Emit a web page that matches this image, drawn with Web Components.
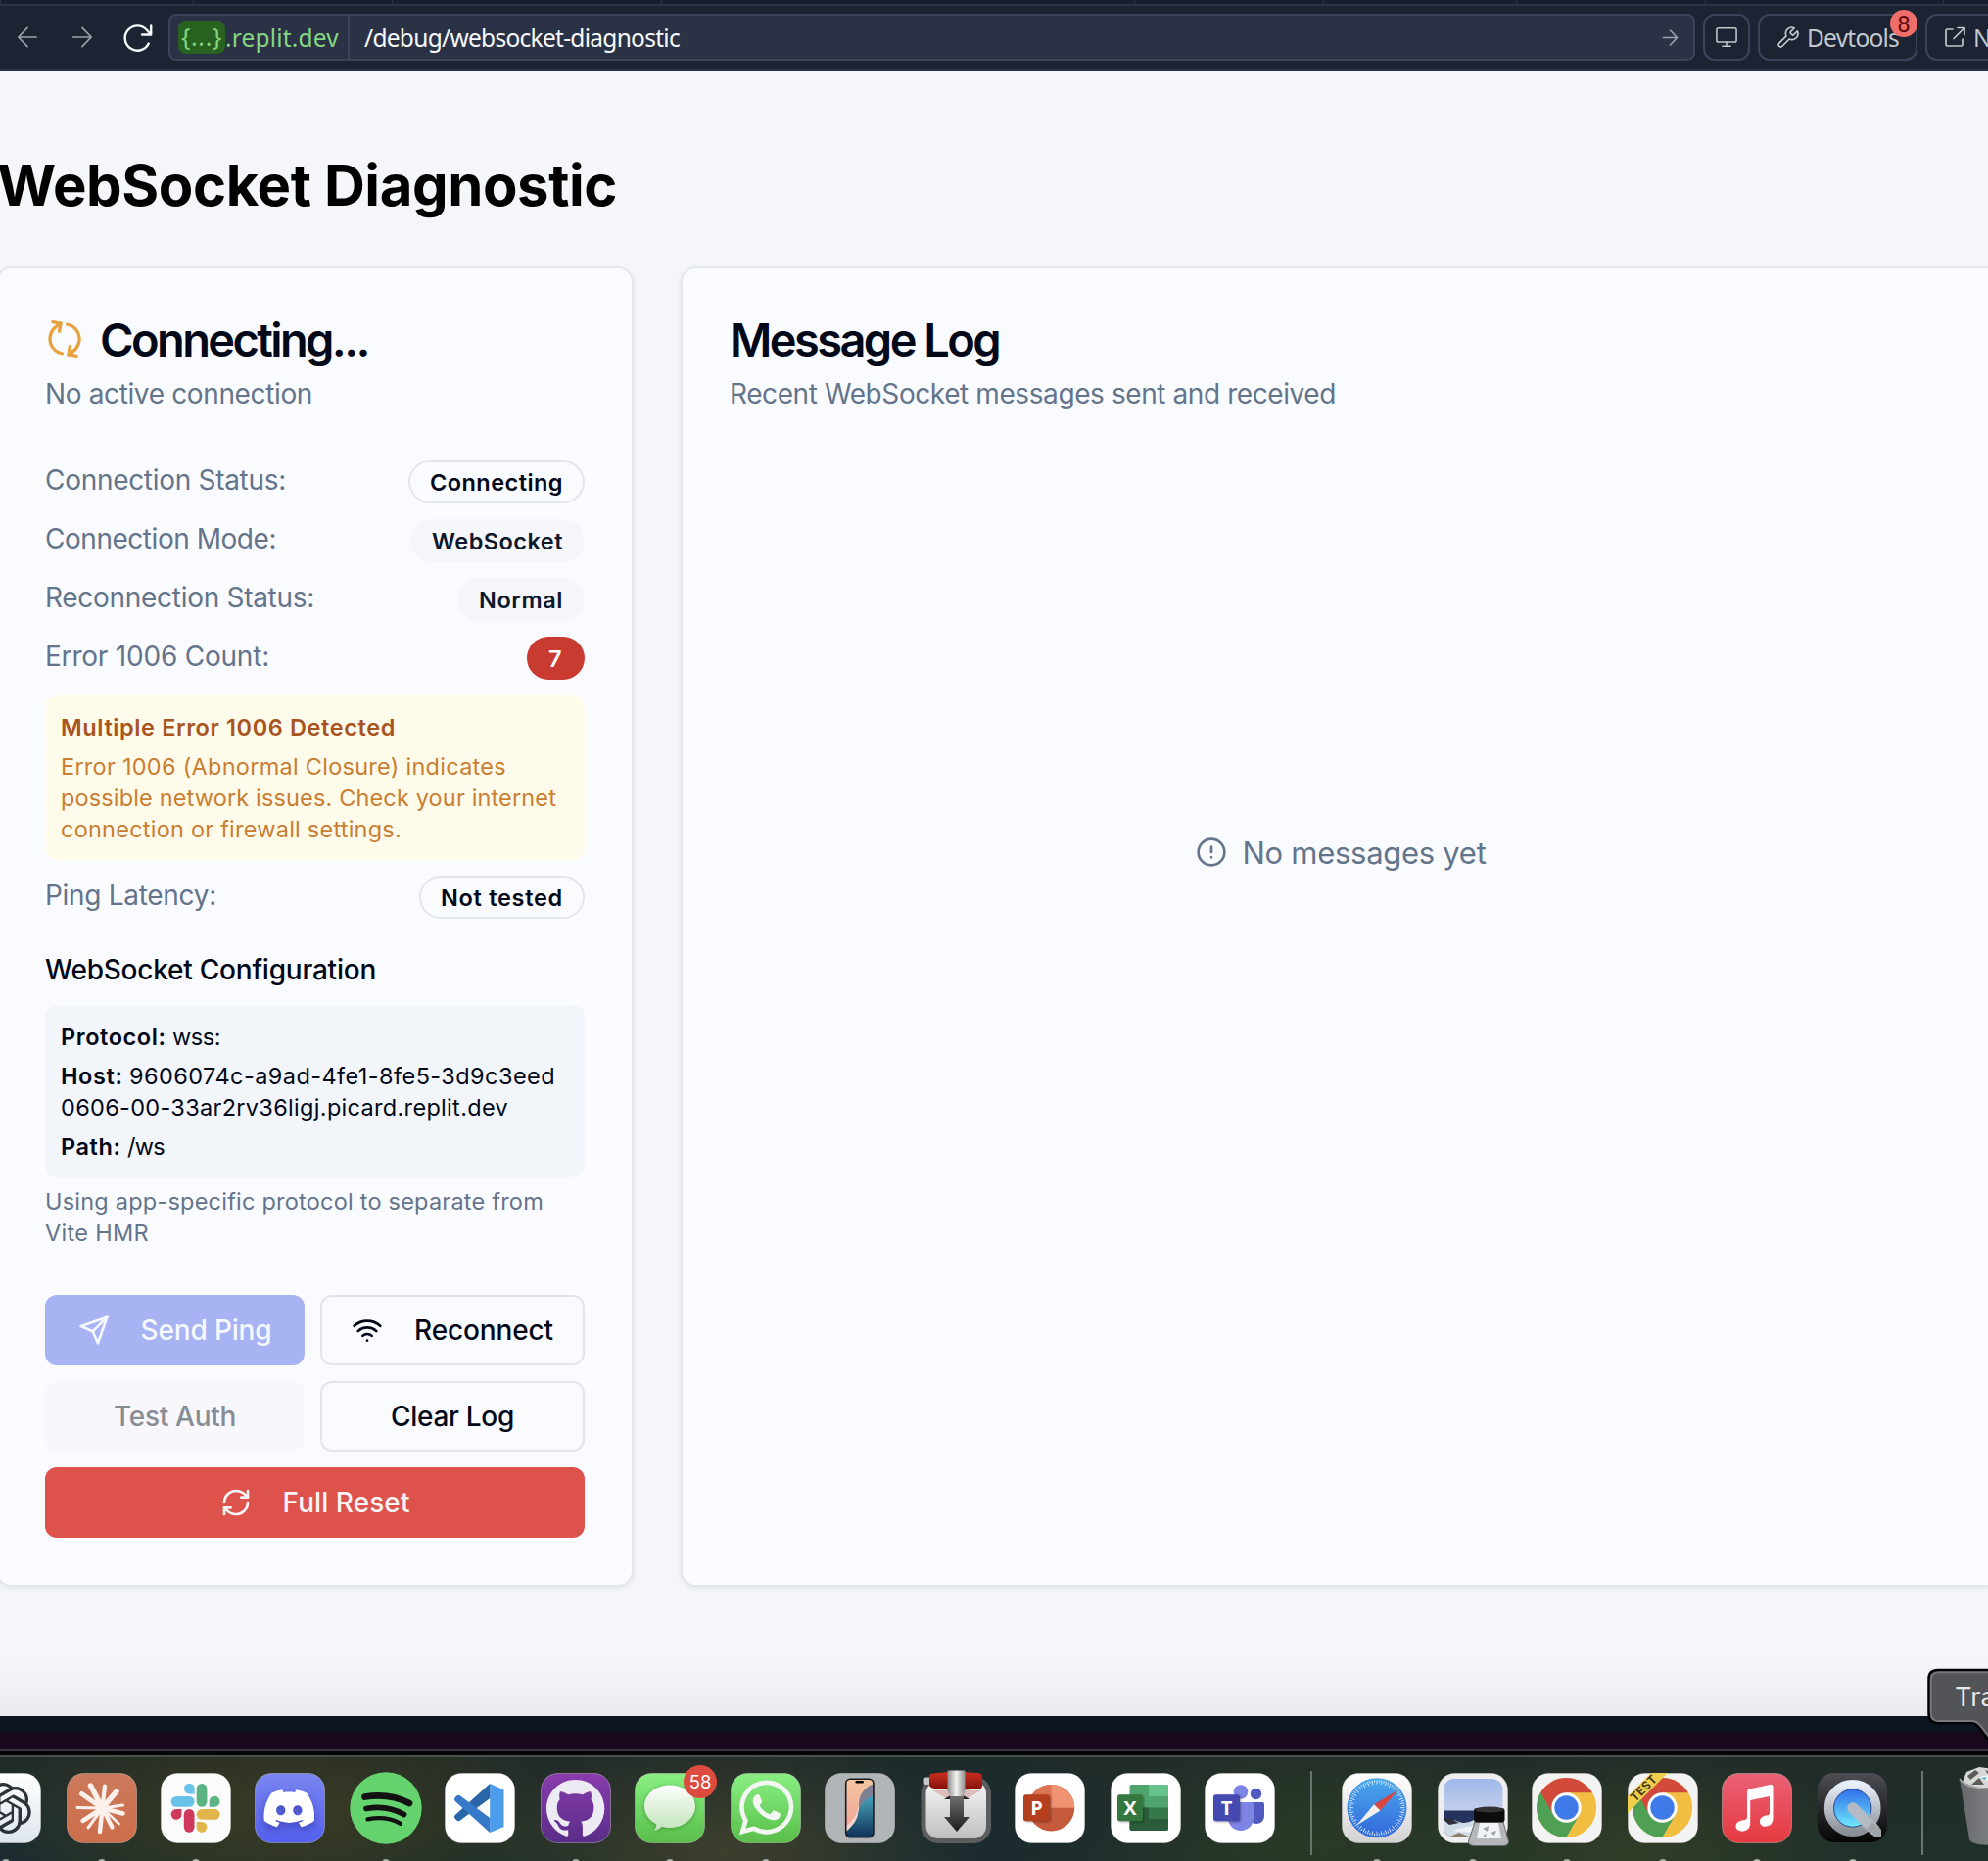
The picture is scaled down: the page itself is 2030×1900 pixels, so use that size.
<!DOCTYPE html>
<html lang="en">
<head>
<meta charset="utf-8">
<title>WebSocket Diagnostic</title>
<style>
html,body{margin:0;padding:0}
body{width:2030px;height:1900px;overflow:hidden;background:#f4f6fa;font-family:Inter,"Noto Sans",sans-serif;font-size:28px;line-height:40px;color:#020817;position:relative}
</style>
</head>
<body>
<app-screen></app-screen>
<script>
const define = (name, html, setup) => customElements.define(name, class extends HTMLElement {
  constructor() {
    super();
    this.attachShadow({ mode: 'open' }).innerHTML = html;
  }
  connectedCallback() { if (setup) setup(this, this.shadowRoot); }
});

/* Text run tracked out or in so that it takes up the width given in `w`. */
const fit = el => {
  const w = parseFloat(el.getAttribute('w'));
  if (!w) return;
  const span = el.shadowRoot.firstElementChild.nextElementSibling;
  el.style.letterSpacing = '0px';
  const natural = span.getBoundingClientRect().width;
  const n = el.textContent.length;
  if (natural && n) el.style.letterSpacing = ((w - natural) / n).toFixed(3) + 'px';
};
define('fit-text', `<style>:host{display:block;white-space:pre}span{display:inline-block;vertical-align:top}</style><span><slot></slot></span>`,
  el => { fit(el); document.addEventListener('DOMContentLoaded', () => fit(el)); });

/* Line icons on a 24 unit grid. */
const ICONS = {
  back: '<path d="M22 12H2M12 1.500 2 12l10 10.500"/>',
  forward: '<path d="M2 12h20M12 1.500 22 12 12 22.500"/>',
  reload: '<path d="M22.500 2v7.500H15M22.500 9.500 19 5.600A10.500 10.500 0 1 0 20.500 17"/>',
  monitor: '<rect x="1" y="2" width="22" height="15.500" rx="2"/><path d="M12 17.500V22M7.500 22h9"/>',
  wrench: '<path d="M14.700 6.300a1 1 0 0 0 0 1.400l1.600 1.600a1 1 0 0 0 1.400 0l3.770-3.770a6 6 0 0 1-7.940 7.940l-6.910 6.910a2.120 2.120 0 0 1-3-3l6.910-6.910a6 6 0 0 1 7.940-7.940l-3.760 3.760z"/>',
  external: '<path d="M10 4H4.500A1.500 1.500 0 0 0 3 5.500v14A1.500 1.500 0 0 0 4.500 21h14a1.500 1.500 0 0 0 1.500-1.500V14M15 2.500h7v7M22 2.500 11 13.500"/>',
  refresh: '<path d="M3 12a9 9 0 0 1 9-9 9.750 9.750 0 0 1 6.740 2.740L21 8"/><path d="M21 3v5h-5"/><path d="M21 12a9 9 0 0 1-9 9 9.750 9.750 0 0 1-6.740-2.740L3 16"/><path d="M8 16H3v5"/>',
  send: '<path d="m22 2-7 20-4-9-9-4Z"/><path d="M22 2 11 13"/>',
  wifi: '<path d="M12 20h.01"/><path d="M2 8.820a15 15 0 0 1 20 0"/><path d="M5 12.859a10 10 0 0 1 14 0"/><path d="M8.500 16.429a5 5 0 0 1 7 0"/>',
  alert: '<circle cx="12" cy="12" r="10"/><path d="M12 8v4M12 16h.01"/>'
};
define('line-icon', '', (el, root) => {
  const s = el.getAttribute('size'), sw = el.getAttribute('stroke') || 2, r = el.getAttribute('turn') || 0;
  root.innerHTML = `<style>:host{display:block;flex:none;width:${s}px;height:${s}px}svg{display:block;overflow:visible;transform:rotate(${r}deg)}</style>
  <svg width="${s}" height="${s}" viewBox="0 0 24 24" fill="none" stroke="currentColor" stroke-width="${sw}" stroke-linecap="round" stroke-linejoin="round">${ICONS[el.getAttribute('name')]}</svg>`;
});

define('tab-strip', `<style>
:host{display:grid;grid-template-columns:197px 203px 275px 219px 264px 193px 197px 193px 243px 1fr;height:6px;box-sizing:border-box}
i{box-sizing:border-box;height:6px;background:#171d2b;border-bottom:2px solid #2b3245;border-left:1px solid #2b3245}
i:first-child{background:none;border:0}
</style><i></i><i></i><i></i><i></i><i></i><i></i><i></i><i></i><i></i><i></i>`);

define('tool-button', `<style>
:host{display:flex;align-items:center;box-sizing:border-box;height:48px;border:2px solid #3c445c;border-radius:12px;color:#c2c8cc;flex:none;position:relative}
</style><slot></slot>`);

define('count-dot', `<style>
:host{position:absolute;top:-6px;right:-2px;width:28px;height:28px;border-radius:50%;background:#ef6e69;color:#5c0b0b;text-align:center;font:400 24px/30px Roboto,sans-serif}
</style><slot></slot>`);

define('browser-bar', `<style>
:host{display:block;height:72px;box-sizing:border-box;background:#1c2333;border-bottom:2px solid #2b3245;font:400 24.500px/48px "Noto Sans",sans-serif}
.row{display:flex;align-items:center;height:48px;padding:8px 0 0 17px}
.nav{color:#9da2a6;display:flex;align-items:center;flex:none;width:155px}
.url{display:flex;align-items:center;box-sizing:border-box;width:1559px;height:48px;background:#2b3245;border:2px solid #3c445c;border-radius:8px;line-height:43px;flex:none;color:#f5f9fc}
.host{display:flex;align-items:center;width:183px;height:44px;box-sizing:border-box;padding-left:8px;border-right:2px solid #3c445c;color:#84d683}
.pill{background:#276221;border-radius:8px;width:48px;height:34px;line-height:33px;box-sizing:border-box;padding-left:3px}
.path{padding-left:15px;flex:1}
tool-button{font-family:"Noto Sans",sans-serif;line-height:43px}
</style>
<tab-strip></tab-strip>
<div class="row">
 <div class="nav"><line-icon name="back" size="22" stroke="1.900"></line-icon><line-icon name="forward" size="22" stroke="1.900" style="margin-left:34px"></line-icon><line-icon name="reload" size="29" stroke="2" style="margin-left:32px;color:#f5f9fc"></line-icon></div>
 <div class="url"><div class="host"><div class="pill"><fit-text w="42">{...}</fit-text></div><fit-text w="116">.replit.dev</fit-text></div>
 <div class="path"><fit-text w="322">/debug/websocket-diagnostic</fit-text></div><line-icon name="forward" size="17" stroke="2.300" style="color:#9da2a6;margin-right:15px"></line-icon></div>
 <tool-button style="width:48px;margin-left:8px;padding-left:11px"><line-icon name="monitor" size="22" stroke="1.700"></line-icon></tool-button>
 <tool-button style="width:163px;margin-left:8px;padding-left:16px"><line-icon name="wrench" size="25" stroke="1.600"></line-icon><fit-text w="94" style="margin-left:7px">Devtools</fit-text><count-dot>8</count-dot></tool-button>
 <tool-button style="width:150px;margin-left:8px;padding-left:16px"><line-icon name="external" size="24" stroke="1.700"></line-icon><fit-text w="16" style="margin-left:7px">N</fit-text></tool-button>
</div>`);

define('ui-card', `<style>
:host{display:block;box-sizing:border-box;border:2px solid #e2e8ee;border-radius:16px;background:#fafbff;padding:49px 48px 48px;box-shadow:0 2px 5px rgba(15,23,42,.07);flex:none}
header{display:flex;align-items:center;height:48px;font:600 47px/48px Inter,sans-serif}
.desc{margin-top:11px;color:#64748b;line-height:40px;margin-bottom:48px}
</style><header><slot name="title"></slot></header><div class="desc"><slot name="desc"></slot></div><slot></slot>`);

define('ui-badge', `<style>
:host{display:block;box-sizing:border-box;height:44px;border-radius:22px;border:2px solid transparent;padding:5px 20px 3px;font:600 23.500px/32px Inter,sans-serif;flex:none}
:host([kind=outline]){border-color:#e2e6ee}
:host([kind=soft]){background:#f4f6fa;color:#0f172a}
:host([kind=danger]){background:#c93a31;color:#fff}
</style><slot></slot>`);

define('status-row', `<style>
:host{display:flex;justify-content:space-between;align-items:flex-start;height:44px;margin-bottom:16px}
.l{color:#64748b}
</style><div class="l"><slot name="label"></slot></div><slot></slot>`);

define('info-box', `<style>
:host{display:block;border-radius:12px;padding:17px 16px 15px;font-size:23.500px;line-height:32px}
:host([kind=warn]){background:#fffbeb;color:#c97e31;margin-bottom:16px}
:host([kind=code]){background:#f2f5fa}
</style><slot></slot>`);

define('ui-button', `<style>
:host{display:flex;align-items:center;justify-content:center;box-sizing:border-box;height:72px;border-radius:12px;border:2px solid transparent;font-weight:500}
:host([kind=primary]){background:#a7b3f2;color:#f5f8ff}
:host([kind=outline]){border-color:#e2e6ec}
:host([kind=soft]){background:#f8f8fc;color:#888c95}
:host([kind=danger]){background:#de524c;color:#f9f4f6}
::slotted(line-icon){margin-right:32px}
</style><slot></slot>`);

define('connection-card', `<style>
:host{display:block}
.h{font-weight:500;margin:32px 0 16px;line-height:40px}
.hint{color:#64748b;font-size:23.500px;line-height:32px;margin:9px 0 47px}
.l{display:flex}b{font-weight:600}.gap{margin-bottom:8px}
.btns{display:grid;grid-template-columns:265px 270px;gap:16px}
.wide{grid-column:1/3}
</style>
<ui-card>
 <line-icon slot="title" name="refresh" size="40" turn="-80" style="color:#e9a23b;margin:-2px 16px 0 0"></line-icon>
 <fit-text slot="title" w="274">Connecting...</fit-text>
 <fit-text slot="desc" w="273">No active connection</fit-text>
 <status-row><fit-text slot="label" w="246">Connection Status:</fit-text><ui-badge kind="outline"><fit-text w="136">Connecting</fit-text></ui-badge></status-row>
 <status-row><fit-text slot="label" w="236">Connection Mode:</fit-text><ui-badge kind="soft"><fit-text w="134">WebSocket</fit-text></ui-badge></status-row>
 <status-row><fit-text slot="label" w="275">Reconnection Status:</fit-text><ui-badge kind="soft"><fit-text w="86">Normal</fit-text></ui-badge></status-row>
 <status-row><fit-text slot="label" w="229">Error 1006 Count:</fit-text><ui-badge kind="danger"><fit-text w="15">7</fit-text></ui-badge></status-row>
 <info-box kind="warn"><fit-text class="gap" w="342" style="font-weight:600;color:#a8551f">Multiple Error 1006 Detected</fit-text><fit-text w="455">Error 1006 (Abnormal Closure) indicates</fit-text><fit-text w="506">possible network issues. Check your internet</fit-text><fit-text w="348">connection or firewall settings.</fit-text></info-box>
 <status-row style="margin:0"><fit-text slot="label" w="175">Ping Latency:</fit-text><ui-badge kind="outline"><fit-text w="125">Not tested</fit-text></ui-badge></status-row>
 <div class="h"><fit-text w="338">WebSocket Configuration</fit-text></div>
 <info-box kind="code">
  <div class="l gap"><fit-text w="114"><b>Protocol: </b></fit-text><fit-text w="49">wss:</fit-text></div>
  <div class="l"><fit-text w="70"><b>Host: </b></fit-text><fit-text w="435">9606074c-a9ad-4fe1-8fe5-3d9c3eed</fit-text></div>
  <fit-text class="gap" w="457">0606-00-33ar2rv36ligj.picard.replit.dev</fit-text>
  <div class="l"><fit-text w="68"><b>Path: </b></fit-text><fit-text w="38">/ws</fit-text></div>
 </info-box>
 <div class="hint"><fit-text w="509">Using app-specific protocol to separate from</fit-text><fit-text w="106">Vite HMR</fit-text></div>
 <div class="btns">
  <ui-button kind="primary"><line-icon name="send" size="32"></line-icon><fit-text w="134">Send Ping</fit-text></ui-button>
  <ui-button kind="outline"><line-icon name="wifi" size="32"></line-icon><fit-text w="142">Reconnect</fit-text></ui-button>
  <ui-button kind="soft"><fit-text w="125">Test Auth</fit-text></ui-button>
  <ui-button kind="outline"><fit-text w="126">Clear Log</fit-text></ui-button>
  <ui-button kind="danger" class="wide"><line-icon name="refresh" size="32"></line-icon><fit-text w="130">Full Reset</fit-text></ui-button>
 </div>
</ui-card>`);

define('message-log', `<style>
:host{display:flex}ui-card{width:1348px}
.empty{height:800px;display:flex;align-items:center;justify-content:center;color:#64748b;font-size:31px}
</style>
<ui-card><fit-text slot="title" w="275">Message Log</fit-text><fit-text slot="desc" w="619">Recent WebSocket messages sent and received</fit-text>
<div class="empty"><line-icon name="alert" size="32" style="margin-right:16px"></line-icon><fit-text w="249" style="margin-top:1px">No messages yet</fit-text></div></ui-card>`);

define('diagnostic-page', `<style>
:host{display:block;box-sizing:border-box;height:1680px;padding-top:77px;overflow:hidden;background:linear-gradient(#ebebef00 1615px,#ebebef66 1650px,#ebebef 1680px),#f4f6fa}
h1{margin:0 0 43px -3px;font:700 58px/80px Inter,sans-serif;color:#000}
.grid{display:flex;gap:48px;margin-left:-4px;align-items:stretch}
connection-card{width:651px;flex:none}message-log{flex:none}
</style><h1><fit-text w="633">WebSocket Diagnostic</fit-text></h1>
<div class="grid"><connection-card></connection-card><message-log></message-log></div>`);

/* Dock artwork, each drawn in a 72 x 72 box. */
const tile = fill => `<rect x=".5" y=".5" width="71" height="71" rx="17" fill="${fill}" stroke="#fff" stroke-opacity=".3"/>`;
const lg = (id, a, b, more = 'x2="0" y2="1"') => `<linearGradient id="${id}" ${more}><stop stop-color="${a}"/><stop offset="1" stop-color="${b}"/></linearGradient>`;
const chrome = `<g transform="translate(35.500 35.500)"><circle r="30.500" fill="#f2be42"/><path d="M0 0 -26.400-15.200A30.500 30.500 0 0 1 26.400-15.200Z" fill="#d24a3b"/><path d="M-13-7.500 0-15.200H26.400L0-15.200Z" fill="#d24a3b"/><path d="M-26.400-15.200A30.500 30.500 0 0 0 0 30.500L13.200 7.600 0 0Z" fill="#4f9f54"/><path d="M0-15.200H26.400A30.500 30.500 0 0 1 0 30.500L13.200 7.600Z" fill="#f2be42"/><path d="M-26.400-15.200-13.200 7.600 0 0V-15.200Z" fill="#d24a3b"/><path d="M-26.400-15.200-13.200 7.600-20 12-29-8Z" fill="#4f9f54"/><circle r="15.200" fill="#fff"/><circle r="12.200" fill="#3f7be8"/></g>`;
const ticks = Array.from({ length: 72 }, (_, i) => `<path d="M0-${i % 2 ? 26 : 24}V-28.500" transform="rotate(${i * 5})"/>`).join('');
const ART = {
  chatgpt: `<defs>${lg('g', '#fff', '#dfe5ef')}</defs>${tile('url(#g)')}<path transform="translate(10 10) scale(2.170)" fill="#2b3238" d="M22.2819 9.8211a5.9847 5.9847 0 0 0-.5157-4.9108 6.0462 6.0462 0 0 0-6.5098-2.9A6.0651 6.0651 0 0 0 4.9807 4.1818a5.9847 5.9847 0 0 0-3.9977 2.9 6.0462 6.0462 0 0 0 .7427 7.0966 5.98 5.98 0 0 0 .511 4.9107 6.051 6.051 0 0 0 6.5146 2.9001A5.9847 5.9847 0 0 0 13.2599 24a6.0557 6.0557 0 0 0 5.7718-4.2058 5.9894 5.9894 0 0 0 3.9977-2.9001 6.0557 6.0557 0 0 0-.7475-7.0729zm-9.022 12.6081a4.4755 4.4755 0 0 1-2.8764-1.0408l.1419-.0804 4.7783-2.7582a.7948.7948 0 0 0 .3927-.6813v-6.7369l2.02 1.1686a.071.071 0 0 1 .038.052v5.5826a4.504 4.504 0 0 1-4.4945 4.4944zm-9.6607-4.1254a4.4708 4.4708 0 0 1-.5346-3.0137l.142.0852 4.783 2.7582a.7712.7712 0 0 0 .7806 0l5.8428-3.3685v2.3324a.0804.0804 0 0 1-.0332.0615L9.74 19.9502a4.4992 4.4992 0 0 1-6.1408-1.6464zM2.3408 7.8956a4.485 4.485 0 0 1 2.3655-1.9728V11.6a.7664.7664 0 0 0 .3879.6765l5.8144 3.3543-2.0201 1.1685a.0757.0757 0 0 1-.071 0l-4.8303-2.7865A4.504 4.504 0 0 1 2.3408 7.872zm16.5963 3.8558L13.1038 8.364 15.1192 7.2a.0757.0757 0 0 1 .071 0l4.8303 2.7913a4.4944 4.4944 0 0 1-.6765 8.1042v-5.6772a.79.79 0 0 0-.407-.667zm2.0107-3.0231l-.142-.0852-4.7735-2.7818a.7759.7759 0 0 0-.7854 0L9.409 9.2297V6.8974a.0662.0662 0 0 1 .0284-.0615l4.8303-2.7866a4.4992 4.4992 0 0 1 6.6802 4.66zM8.3065 12.863l-2.02-1.1638a.0804.0804 0 0 1-.038-.0567V6.0742a4.4992 4.4992 0 0 1 7.3757-3.4537l-.142.0805L8.704 5.459a.7948.7948 0 0 0-.3927.6813zm1.0976-2.3654l2.602-1.4998 2.6069 1.4998v2.9994l-2.5974 1.4997-2.6067-1.4997Z"/>`,
  claude: `<defs>${lg('g', '#cb7a5c', '#cd6d49')}</defs>${tile('url(#g)')}<g stroke="#fbf0ec" stroke-linecap="round" stroke-width="4.200"><path d="M36.500 36 24.500 13" stroke-width="5.500"/><path d="M36.500 36 39 13.500"/><path d="M36.500 36 51 19" stroke-width="5.500"/><path d="M36.500 36 57.500 33" stroke-width="3.200"/><path d="M36.500 36 57.500 41.500" stroke-width="4.500"/><path d="M36.500 36 53.500 52" stroke-width="2.600"/><path d="M36.500 36 46.500 55.500"/><path d="M36.500 36 34 60" stroke-width="4.500"/><path d="M36.500 36 22 56" stroke-width="3"/><path d="M36.500 36 16.500 49" stroke-width="4.500"/><path d="M36.500 36 11 35.500" stroke-width="2.800"/><path d="M36.500 36 15.500 21.500" stroke-width="5"/></g><circle cx="36.500" cy="36" r="6.500" fill="#fbf0ec"/>`,
  slack: `${tile('#fbfbfb')}<g fill="#68c2ea"><path d="M34.700 21.500h-5.500a5.400 5.400 0 1 1 5.500-5.400z"/><rect x="10.700" y="24" width="24" height="10.700" rx="5.350"/></g><g fill="#5bb381"><rect x="36.700" y="11" width="10.700" height="23.700" rx="5.350"/><path d="M49.700 34.700v-5.500a5.450 5.450 0 1 1 5.500 5.500z"/></g><g fill="#cf375b"><path d="M21.400 37v5.400a5.350 5.350 0 1 1-5.400-5.400z"/><rect x="23.800" y="37" width="10.700" height="23.700" rx="5.350"/></g><g fill="#e2b54b"><rect x="36.700" y="37" width="24" height="10.700" rx="5.350"/><path d="M36.700 50h5.400a5.350 5.350 0 1 1-5.400 5.400z"/></g>`,
  discord: `<defs>${lg('g', '#7a86f0', '#5560ee')}</defs>${tile('url(#g)')}<path style="filter:drop-shadow(0 2px 2px #2a2f9988)" transform="translate(9.500 11.300) scale(2.150 2.080)" fill="#fff" d="M20.317 4.3698a19.7913 19.7913 0 00-4.8851-1.5152.0741.0741 0 00-.0785.0371c-.211.3753-.4447.8648-.6083 1.2495-1.8447-.2762-3.68-.2762-5.4868 0-.1636-.3933-.4058-.8742-.6177-1.2495a.077.077 0 00-.0785-.037 19.7363 19.7363 0 00-4.8852 1.515.0699.0699 0 00-.0321.0277C.5334 9.0458-.319 13.5799.0992 18.0578a.0824.0824 0 00.0312.0561c2.0528 1.5076 4.0413 2.4228 5.9929 3.0294a.0777.0777 0 00.0842-.0276c.4616-.6304.8731-1.2952 1.226-1.9942a.076.076 0 00-.0416-.1057c-.6528-.2476-1.2743-.5495-1.8722-.8923a.077.077 0 01-.0076-.1277c.1258-.0943.2517-.1923.3718-.2914a.0743.0743 0 01.0776-.0105c3.9278 1.7933 8.18 1.7933 12.0614 0a.0739.0739 0 01.0785.0095c.1202.099.246.1981.3728.2924a.077.077 0 01-.0066.1276 12.2986 12.2986 0 01-1.873.8914.0766.0766 0 00-.0407.1067c.3604.698.7719 1.3628 1.225 1.9932a.076.076 0 00.0842.0286c1.961-.6067 3.9495-1.5219 6.0023-3.0294a.077.077 0 00.0313-.0552c.5004-5.177-.8382-9.6739-3.5485-13.6604a.061.061 0 00-.0312-.0286zM8.02 15.3312c-1.1825 0-2.1569-1.0857-2.1569-2.419 0-1.3332.9555-2.4189 2.157-2.4189 1.2108 0 2.1757 1.0952 2.1568 2.419 0 1.3332-.9555 2.4189-2.1569 2.4189zm7.9748 0c-1.1825 0-2.1569-1.0857-2.1569-2.419 0-1.3332.9554-2.4189 2.1569-2.4189 1.2108 0 2.1757 1.0952 2.1568 2.419 0 1.3332-.946 2.4189-2.1568 2.4189Z"/>`,
  spotify: `<circle cx="36" cy="36" r="36.700" fill="#65d36e"/><g fill="none" stroke="#121212" stroke-linecap="round"><path d="M14.500 24.500Q40 20.500 60 31" stroke-width="6.800"/><path d="M16 36.500Q37.500 32.500 54.500 42.500" stroke-width="5.800"/><path d="M17.500 47.300Q36.500 43.500 51 51.800" stroke-width="4.400"/></g>`,
  vscode: `${tile('#fff')}<path d="M46.200 11 60.500 17.300V55L46.200 61Z" fill="#4b9ceb"/><path d="M46.200 11V26L16 48.500Q14 50 12.200 48.300L10.500 46.500Q9 44.800 10.800 43Z" fill="#2a65a8"/><path d="M46.200 61V46L16 23.500Q14 22 12.200 23.700L10.500 25.500Q9 27.200 10.800 29Z" fill="#3679c9"/>`,
  github: `<defs>${lg('g', '#8a3cae', '#592d88')}</defs>${tile('url(#g)')}<path transform="translate(6 6.200) scale(2.470)" fill="#eceaf2" d="M12 .297c-6.630 0-12 5.373-12 12 0 5.303 3.438 9.800 8.205 11.385.6.113.82-.258.82-.577 0-.285-.01-1.040-.015-2.040-3.338.724-4.042-1.610-4.042-1.610C4.422 18.070 3.633 17.700 3.633 17.700c-1.087-.744.084-.729.084-.729 1.205.084 1.838 1.236 1.838 1.236 1.070 1.835 2.809 1.305 3.495.998.108-.776.417-1.305.76-1.605-2.665-.3-5.466-1.332-5.466-5.930 0-1.310.465-2.380 1.235-3.220-.135-.303-.54-1.523.105-3.176 0 0 1.005-.322 3.300 1.230.96-.267 1.980-.399 3-.405 1.020.006 2.040.138 3 .405 2.280-1.552 3.285-1.230 3.285-1.230.645 1.653.24 2.873.12 3.176.765.84 1.230 1.910 1.230 3.220 0 4.610-2.805 5.625-5.475 5.920.42.36.81 1.096.81 2.220 0 1.606-.015 2.896-.015 3.286 0 .315.21.69.825.57C20.565 22.092 24 17.592 24 12.297c0-6.627-5.373-12-12-12"/>`,
  messages: `<defs>${lg('g', '#89ef83', '#59bf49')}${lg('h', '#fff', '#bfe3b8')}</defs>${tile('url(#g)')}<path d="M36 12.500c14.500 0 26 9.500 26 21.500S50.500 56 36 56c-3 0-6-.4-8.500-1.200-1.500 2-4.500 4-8 4.200 2-2 3-4.500 2.600-6.500C14.500 48.500 10 41.500 10 34 10 22 21.500 12.500 36 12.500Z" fill="url(#h)" style="filter:drop-shadow(0 1px 2px #2d6e2788)"/>`,
  whatsapp: `<defs>${lg('g', '#89ef83', '#59bf49')}</defs>${tile('url(#g)')}<path transform="translate(8.800 7.500) scale(2.320)" fill="#f3f6f3" d="M17.472 14.382c-.297-.149-1.758-.867-2.030-.967-.273-.099-.471-.148-.67.15-.197.297-.767.966-.94 1.164-.173.199-.347.223-.644.075-.297-.15-1.255-.463-2.390-1.475-.883-.788-1.480-1.761-1.653-2.059-.173-.297-.018-.458.13-.606.134-.133.298-.347.446-.52.149-.174.198-.298.298-.497.099-.198.05-.371-.025-.52-.075-.149-.669-1.612-.916-2.207-.242-.579-.487-.5-.669-.51-.173-.008-.371-.01-.57-.01-.198 0-.52.074-.792.372-.272.297-1.040 1.016-1.040 2.479 0 1.462 1.065 2.875 1.213 3.074.149.198 2.096 3.200 5.077 4.487.709.306 1.262.489 1.694.625.712.227 1.360.195 1.871.118.571-.085 1.758-.719 2.006-1.413.248-.694.248-1.289.173-1.413-.074-.124-.272-.198-.57-.347m-5.421 7.403h-.004a9.870 9.870 0 01-5.031-1.378l-.361-.214-3.741.982.998-3.648-.235-.374a9.860 9.860 0 01-1.510-5.260c.001-5.450 4.436-9.884 9.888-9.884 2.640 0 5.122 1.030 6.988 2.898a9.825 9.825 0 012.893 6.994c-.003 5.450-4.437 9.884-9.885 9.884m8.413-18.297A11.815 11.815 0 0012.050 0C5.495 0 .16 5.335.157 11.892c0 2.096.547 4.142 1.588 5.945L.057 24l6.305-1.654a11.882 11.882 0 005.683 1.448h.005c6.554 0 11.890-5.335 11.893-11.893a11.821 11.821 0 00-3.480-8.413Z"/>`,
  iphone: `<defs>${lg('g', '#4aa5bd', '#0c2e52')}${lg('h', '#f2c7a0', '#f29b96')}<clipPath id="c"><rect x="22" y="6.500" width="27.500" height="59" rx="4"/></clipPath></defs>${tile('#b1b5b7')}<g clip-path="url(#c)"><path fill="url(#h)" d="M20 5h32v62H20z"/><path d="M50 11C38 17 34 24 35 38L50 28Z" fill="#7d7f92"/><path d="M33 27C37 36 32 46 21 55V62C33 50 35 44 35 36Z" fill="#f6d5cf"/><path d="M50 23C40 27 35 34 34 42 33 50 27 55 21 61V67H50Z" fill="url(#g)"/></g><rect x="21.700" y="6.200" width="28.200" height="59.600" rx="4.500" fill="none" stroke="#17191c" stroke-width="1.600"/><rect x="31.500" y="8" width="8.500" height="2.500" rx="1.200" fill="#000"/>`,
  handle: `<defs>${lg('g', '#f8f8f8', '#bdbdbd')}${lg('m', '#8d8d8d', '#f2f2f2', 'x2=".5" y2="0" spreadMethod="reflect"')}${lg('k', '#777', '#1c1c1c')}${lg('r', '#cf3020', '#7c0f08')}</defs><rect x="3" y="6" width="66.500" height="63.500" rx="15" fill="url(#g)" stroke="#5c5d5e" stroke-width="5"/><path d="M12 18H62L48 26H26Z" fill="#a8322b" opacity=".25"/><path d="M37 19 50 27H24Z" fill="#222"/><path d="M30 20H44V45H50L37 60 24 45H30Z" fill="url(#k)"/><rect x="3.500" y="4.500" width="7" height="7.500" rx="2" fill="#c9c9c9"/><path d="M9 3Q10 .5 14 .3L36-1.500 60 .3Q63 1 63 4V13Q63 16 60 16.500L36 18 14 16Q9 15 9 12Z" fill="url(#r)"/><path d="M27.500-2.500H45.500V17.500L43.500 24H30L27.500 17.500Z" fill="url(#m)"/>`,
  powerpoint: `${tile('#fff')}<g transform="translate(37.500 35.700)"><circle r="23.800" fill="#c55a3b"/><path d="M-23.800 0A23.800 23.800 0 0 1 0-23.800V0Z" fill="#dc7553"/><path d="M0-23.800A23.800 23.800 0 0 1 23.800 0H0Z" fill="#ef9373"/></g><rect x="9" y="22.200" width="27" height="27" rx="2.500" fill="#b5401f" style="filter:drop-shadow(1px 1px 1px #0005)"/><text x="22.500" y="43" text-anchor="middle" font-family="Open Sans" font-weight="700" font-size="20" fill="#fff">P</text>`,
  excel: `${tile('#fff')}<g transform="translate(19.500 12)"><rect width="39.500" height="47" rx="2" fill="#4fa36d"/><path d="M19.500 0H37.500a2 2 0 0 1 2 2V12H19.500Z" fill="#66c28a"/><path d="M0 23.500H39.500V35H0Z" fill="#35794a"/><path d="M0 23.500H19.500V35H0Z" fill="#2b5c39"/><path d="M0 35H39.500V45a2 2 0 0 1-2 2H2a2 2 0 0 1-2-2Z" fill="#2c5c39"/></g><rect x="7" y="22.200" width="26" height="27" rx="2.500" fill="#34773f" style="filter:drop-shadow(1px 1px 1px #0005)"/><text x="20" y="43" text-anchor="middle" font-family="Open Sans" font-weight="700" font-size="20" fill="#fff">X</text>`,
  teams: `${tile('#fff')}<circle cx="52.500" cy="21.500" r="5.700" fill="#5158bf"/><path d="M46 30H59a2 2 0 0 1 2 2V44c0 5-4 8-8 8s-8-3-8-8Z" fill="#5158bf"/><circle cx="37" cy="19.500" r="7.300" fill="#7e84e3"/><path d="M25 30H48a2 2 0 0 1 2 2V46a13 13 0 0 1-26 0Z" fill="#7e84e3"/><rect x="9" y="22.200" width="27" height="27" rx="2.500" fill="#454ab3" style="filter:drop-shadow(1px 1px 1px #0005)"/><text x="22.500" y="43" text-anchor="middle" font-family="Open Sans" font-weight="700" font-size="20" fill="#fff">T</text>`,
  safari: `<defs>${lg('g', '#fff', '#d3d3d3')}${lg('h', '#4ba9ec', '#3167db')}</defs>${tile('url(#g)')}<g transform="translate(36 35.700)"><circle r="30.500" fill="url(#h)"/><g stroke="#d9ecfb" stroke-width=".9">${ticks}</g><path d="M21.500-18-3-3.500 3.500 2.800Z" fill="#d8453c"/><path d="M-21 18-3-3.500 3.500 2.800Z" fill="#f1f1f1"/></g>`,
  preview: `<defs>${lg('g', '#98b5ea', '#c3cfeb')}<clipPath id="c"><rect x="6" y="6" width="60.500" height="60" rx="11"/></clipPath></defs>${tile('#eeeef0')}<g clip-path="url(#c)"><path d="M0 0H72V39H0Z" fill="url(#g)"/><path d="M0 38.500H72V72H0Z" fill="#25345f"/><path d="M0 51Q12 45 22 50 30 53 40 46L72 50V72H0Z" fill="#cfdbe6"/><path d="M5 47 14 47 22 51 12 53Z" fill="#2d2f3a"/><path d="M16 58 36 54 40 61 20 60Z" fill="#eef3f6"/><path d="M8 67 22 61 34 66V72H8Z" fill="#8a7d68"/></g><path d="M38 50H67L72.500 70Q73 74.500 66 74.500H38Q31 74.500 31.500 70Z" fill="#b4b8bb" stroke="#66686a"/><path d="M43 51H62L65 67H40Z" fill="#f1f3f4"/><path d="M46 57 52 54 51 60ZM54 61 60 59 58 64ZM46 64 50 62 49 66Z" fill="#9aa7b5"/><rect x="37" y="36" width="31.500" height="14.500" rx="3" fill="#0c0c0c"/><ellipse cx="52.700" cy="37.500" rx="15" ry="3" fill="#333"/>`,
  chrome: tile('#f3f3f3') + chrome,
  canary: `<defs><clipPath id="c"><rect width="72" height="72" rx="17"/></clipPath></defs>${tile('#f3f3f3')}${chrome}<g clip-path="url(#c)"><path d="M0 24 24 0H41L0 41Z" fill="#f0cf4e"/><text transform="translate(19.500 18.500) rotate(-45)" text-anchor="middle" font-family="Roboto" font-weight="700" font-size="12.500" letter-spacing=".6" fill="#4a3c10">TEST</text></g>`,
  music: `<defs>${lg('g', '#ea6177', '#e53a40')}</defs>${tile('url(#g)')}<path d="M26 19.500Q26 17 28.500 16.400L49.500 12Q52.500 11.500 52.500 14.200V46.500C52.500 52 48.500 54.700 44.500 54.700 41 54.700 39 52.500 39 49.700 39 46 42 44.300 45.500 43.600 48.500 43 49 42.500 49 40.500V24L29.200 28V51.500C29.200 57 25 59.500 21 59.500 17 59.500 14.500 57.300 14.500 54.500 14.500 51 17.300 49.200 21 48.500 25 47.800 26 47.500 26 45Z" fill="#fff"/>`,
  quicktime: `<defs>${lg('g', '#4d4e54', '#050506')}${lg('h', '#e9effa', '#8b9097')}${lg('q', '#2f6fe8', '#6fe9fb')}</defs><rect width="71" height="71" rx="17" fill="url(#g)"/><circle cx="35.700" cy="36" r="24" fill="none" stroke="url(#h)" stroke-width="9.800"/><circle cx="35.700" cy="36" r="19.200" fill="url(#q)" stroke="#2b4a98" stroke-width="1"/><path d="M36 36 58 58" stroke="#b3bac3" stroke-width="11.500" stroke-linecap="round"/><path d="M56 50 65 58V65H58L50 57Z" fill="#9fa4aa"/>`,
  trash: `<defs>${lg('g', '#6a6c6e', '#a2a4a6', 'x2="1" y2="0"')}</defs><path d="M3 9 7-1 20-6 34-4 52-2 60 8 60 16 8 15Z" fill="#d6d8d6"/><path d="M8 3 16-3 20 0 11 7ZM26-3 36 0 30 3ZM12 12 20 5 25 12Z" fill="#5b5d5a"/><path d="M20 4 32 2 28 8Z" fill="#fff"/><path d="M22 5 28 4 26 7Z" fill="#3fb6c8"/><path d="M0 6Q10 16 36 17L72 8 62 68Q60 74 36 74T10 68Z" fill="url(#g)" opacity=".94"/><path d="M0 6Q6 16 36 17" fill="none" stroke="#a6a9a8" stroke-width="1.500"/>`
};
define('dock-icon', '', (el, root) => {
  root.innerHTML = `<style>
:host{display:block;position:relative;flex:none;width:72px;height:72px}
:host([wide]){margin-left:2px}
svg{display:block;overflow:visible}
i{position:absolute;left:32px;top:88px;width:8px;height:8px;border-radius:50%;background:#aab3aa}
::slotted(span){position:absolute;left:50px;top:-8px;width:34px;height:34px;border-radius:50%;background:#dd4b3f;color:#fff;font:400 18.500px/34px Inter,sans-serif;text-align:center}
</style><svg width="72" height="72" viewBox="0 0 72 72">${ART[el.getAttribute('app')]}</svg>${el.hasAttribute('running') ? '<i></i>' : ''}<slot></slot>`;
});

define('dock-bar', `<style>
:host{display:block;height:108px;overflow:hidden;
background:radial-gradient(300px 110px at 290px 60px,#3a3b22,#3a3b2200),radial-gradient(260px 120px at 740px 100px,#3d3f2c,#3d3f2c00),radial-gradient(240px 120px at 960px 80px,#1a2a30,#1a2a3000),radial-gradient(260px 120px at 1350px 90px,#2b3a26,#2b3a2600),radial-gradient(260px 110px at 1660px 100px,#313d26,#313d2600),radial-gradient(120px 100px at 0 100px,#1c2c30,#1c2c3000),linear-gradient(#222b28,#1f302b);background-repeat:no-repeat}
.edge{height:2px;background:#48524d}
.row{display:flex;align-items:flex-start;padding-top:16px;margin-left:-30px}
.g{display:flex;gap:24px;flex:none}
hr{border:0;margin:-2px 0 0;width:2px;height:86px;background:#6a756f;flex:none}
</style>
<div class="edge"></div>
<div class="row">
<div class="g"><dock-icon app="chatgpt" running></dock-icon><dock-icon app="claude" wide running></dock-icon><dock-icon app="slack" running></dock-icon><dock-icon app="discord"></dock-icon><dock-icon app="spotify" wide running></dock-icon><dock-icon app="vscode"></dock-icon><dock-icon app="github" wide running></dock-icon><dock-icon app="messages" running><span>58</span></dock-icon><dock-icon app="whatsapp" wide running></dock-icon><dock-icon app="iphone"></dock-icon><dock-icon app="handle" wide></dock-icon><dock-icon app="powerpoint"></dock-icon><dock-icon app="excel" wide></dock-icon><dock-icon app="teams"></dock-icon></div>
<hr style="margin-left:36px;margin-right:30px">
<div class="g"><dock-icon app="safari" running></dock-icon><dock-icon app="preview" wide running></dock-icon><dock-icon app="chrome" running></dock-icon><dock-icon app="canary" wide running></dock-icon><dock-icon app="music" running></dock-icon><dock-icon app="quicktime" wide running></dock-icon></div>
<hr style="margin-left:34px;margin-right:37px">
<dock-icon app="trash"></dock-icon>
</div>`);

define('desk-edge', `<style>
:host{display:block;height:40px}
.a{height:16px;background:#0d1422}.b{height:18px;background:#17091b}.c{height:2px;background:#3b3140}.d{height:4px;background:#050605}
</style><div class="a"></div><div class="b"></div><div class="c"></div><div class="d"></div>`);

define('dock-tooltip', `<style>
:host{position:absolute;left:1968px;top:1703px;width:62px;height:80px;overflow:hidden;color:#e6e7e8;font:400 27px/40px Inter,sans-serif}
svg{position:absolute;left:0;top:0}fit-text{position:absolute;left:28px;top:10px}
</style><svg width="62" height="80"><path d="M70 2H11Q1.500 2 1.500 11V46Q1.500 56 11 56H44Q50 56 53 61L70 83Z" fill="#525457" stroke="#000" stroke-width="2.500"/><path d="M70 4.300H12Q3.700 4.300 3.700 12V46Q3.700 54 12 54H45Q51 54 55 59.500L70 79" fill="none" stroke="#77797d" stroke-width="1.800"/></svg><fit-text w="42">Tra</fit-text>`);

define('app-screen', `<style>:host{display:flex;flex-direction:column;width:2030px;height:1900px;overflow:hidden;position:relative}browser-bar,diagnostic-page,desk-edge,dock-bar{flex:none}</style>
<browser-bar></browser-bar><diagnostic-page></diagnostic-page><desk-edge></desk-edge><dock-bar></dock-bar><dock-tooltip></dock-tooltip>`);
</script>
</body>
</html>
